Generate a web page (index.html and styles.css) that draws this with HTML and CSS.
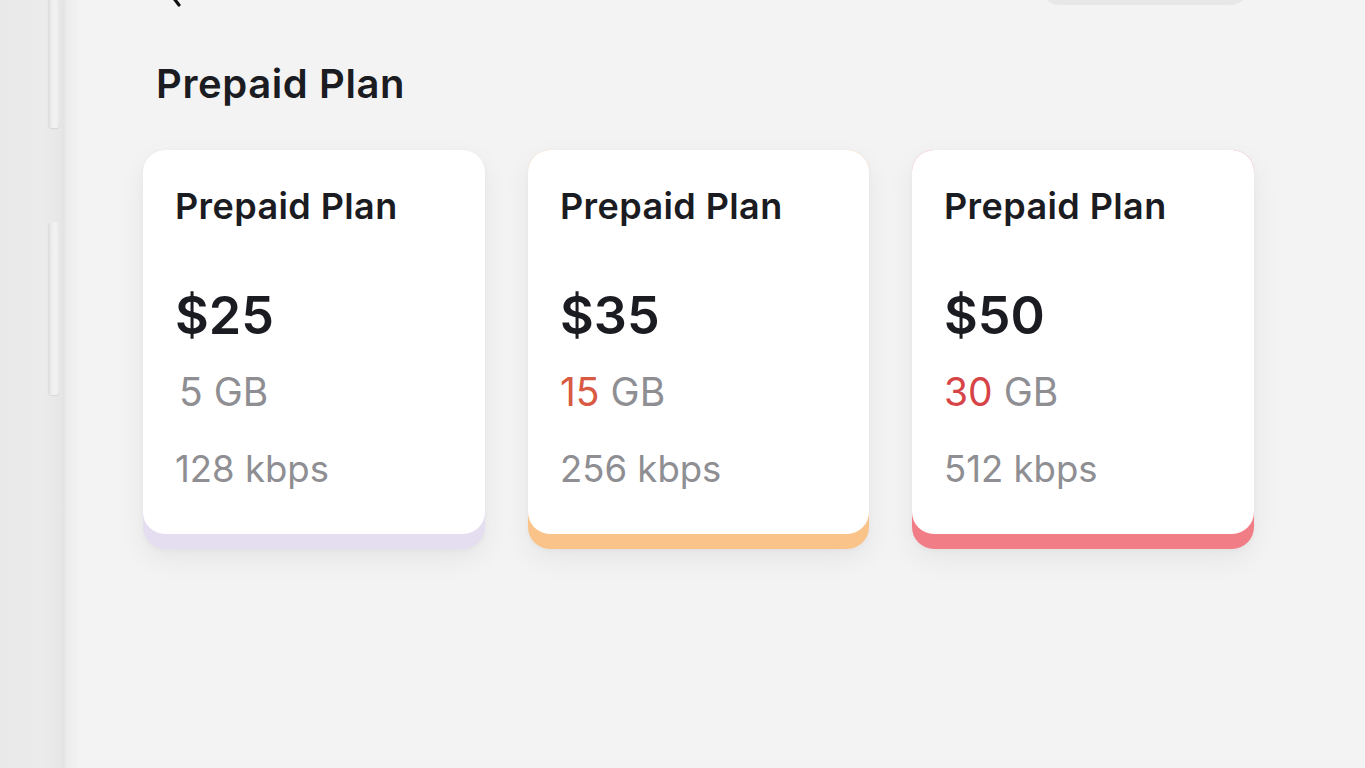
FILE: index.html
```html
<!DOCTYPE html>
<html lang="en">
<head>
<meta charset="utf-8">
<title>Prepaid Plan</title>
<link rel="stylesheet" href="styles.css">
</head>
<body>
<div class="frame">
  <div class="side">
    <div class="side-btn side-btn-top"></div>
    <div class="side-btn side-btn-mid"></div>
  </div>
  <div class="edge"></div>
  <main class="screen">
    <header class="topbar">
      <svg class="back" width="30" height="30" viewBox="0 0 30 30" aria-hidden="true">
        <path d="M20 2 L9 14 L19 27" fill="none" stroke="#111" stroke-width="3.2" stroke-linecap="round" stroke-linejoin="round"/>
      </svg>
      <div class="search-pill"></div>
    </header>
    <h1 class="heading">Prepaid Plan</h1>
    <section class="plans">
      <article class="card card-lavender">
        <div class="card-body">
          <h2 class="card-title">Prepaid Plan</h2>
          <div class="price">$25</div>
          <div class="data data-indent">5 GB</div>
          <div class="speed">128 kbps</div>
        </div>
      </article>
      <article class="card card-orange">
        <div class="card-body">
          <h2 class="card-title">Prepaid Plan</h2>
          <div class="price">$35</div>
          <div class="data"><span class="hl-orange">15</span> GB</div>
          <div class="speed">256 kbps</div>
        </div>
      </article>
      <article class="card card-red">
        <div class="card-body">
          <h2 class="card-title">Prepaid Plan</h2>
          <div class="price">$50</div>
          <div class="data"><span class="hl-red">30</span> GB</div>
          <div class="speed">512 kbps</div>
        </div>
      </article>
    </section>
  </main>
</div>
</body>
</html>
```

FILE: styles.css
```css
* { box-sizing: border-box; }

html, body {
  margin: 0;
  padding: 0;
  height: 100%;
  overflow: hidden;
}

body {
  font-family: Inter, "Noto Sans", "Liberation Sans", sans-serif;
  background: #f3f3f3;
  color: #1b1b22;
}

.frame {
  display: flex;
  height: 768px;
}

.side {
  width: 62px;
  flex: none;
  background: linear-gradient(90deg, #e9e9e9 0%, #ebebeb 70%, #e6e6e6 100%);
  display: flex;
  flex-direction: column;
  align-items: flex-end;
  padding-right: 2px;
}

.side-btn {
  width: 12px;
  background: linear-gradient(90deg, #dcdcdc 0%, #efefef 35%, #f1f1f1 70%, #e4e4e4 100%);
  box-shadow: 0 1px 1px rgba(0, 0, 0, 0.08);
}

.side-btn-top {
  height: 128px;
  border-radius: 0 0 4px 4px;
}

.side-btn-mid {
  height: 173px;
  margin-top: 94px;
  border-radius: 4px;
}

.edge {
  width: 16px;
  flex: none;
  background: linear-gradient(90deg, #e1e1e1 0%, #ececec 30%, #f1f1f1 100%);
}

.screen {
  flex: 1;
  padding: 0 0 0 65px;
  background: #f3f3f3;
}

.topbar {
  display: flex;
  justify-content: space-between;
  align-items: flex-end;
  height: 6px;
  padding-right: 115px;
}

.back {
  display: block;
  margin-left: 17px;
  margin-bottom: -2px;
  flex: none;
}

.search-pill {
  width: 210px;
  height: 40px;
  border-radius: 20px;
  background: #e7e7e7;
  flex: none;
  margin-bottom: 1px;
}

.heading {
  margin: 54px 0 0 13px;
  font-size: 40px;
  line-height: 48px;
  font-weight: 600;
  letter-spacing: 0.6px;
  color: #1b1b22;
}

.plans {
  display: grid;
  grid-template-columns: 342px 341px 342px;
  column-gap: 43px;
  margin-top: 42px;
}

.card {
  border-radius: 22px;
  padding-bottom: 15px;
  box-shadow: 0 10px 28px rgba(0, 0, 0, 0.055), 0 2px 6px rgba(0, 0, 0, 0.03);
}

.card-lavender { background: #e5ddf0; }
.card-orange { background: #f9c389; }
.card-red { background: #f17e86; }

.card-body {
  background: #ffffff;
  border-radius: 22px;
  height: 384px;
  padding: 34px 30px 0 32px;
}

.card-title {
  margin: 0;
  font-size: 36px;
  line-height: 44px;
  font-weight: 600;
  letter-spacing: 0.4px;
  color: #1b1b22;
}

.price {
  margin-top: 58px;
  font-size: 52px;
  line-height: 60px;
  font-weight: 600;
  color: #1b1b22;
}

.data {
  margin-top: 22px;
  font-size: 39px;
  line-height: 48px;
  font-weight: 400;
  color: #8e8e93;
}

.data-indent {
  padding-left: 4px;
}

.speed {
  margin-top: 30px;
  font-size: 36.5px;
  line-height: 46px;
  font-weight: 400;
  color: #8e8e93;
}

.hl-orange { color: #d95a43; }
.hl-red { color: #d74448; }
```
